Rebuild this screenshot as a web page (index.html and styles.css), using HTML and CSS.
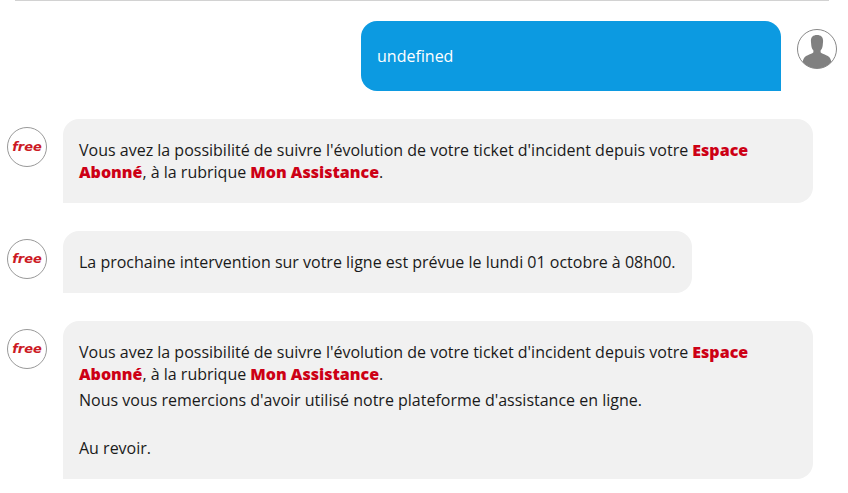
FILE: index.html
```html
<!DOCTYPE html>
<html lang="fr">
<head>
<meta charset="utf-8">
<title>Assistance Free</title>
<link rel="stylesheet" href="styles.css">
</head>
<body>
<hr class="divider">
<main class="chat">
  <div class="message message-user">
    <div class="bubble">undefined</div>
    <svg class="avatar" viewBox="0 0 40 40" aria-hidden="true">
      <circle class="ring" cx="20" cy="20" r="19.5"/>
      <path class="person" d="M20 6C24 6 26.2 8.2 26.1 12L25.7 16.5C25.5 18.8 24.6 20.4 23.6 21.5V23.2C25 25.2 30.4 25.8 32.4 28.2C33.6 29.6 34.2 31.6 34.4 33A19.5 19.5 0 0 1 5.6 33C5.8 31.6 6.4 29.6 7.6 28.2C9.6 25.8 15 25.2 16.4 23.2V21.5C15.4 20.4 14.5 18.8 14.3 16.5L13.9 12C13.8 8.2 16 6 20 6Z"/>
    </svg>
  </div>

  <div class="message">
    <div class="avatar logo">free</div>
    <div class="bubble">
      <p>Vous avez la possibilité de suivre l'évolution de votre ticket d'incident depuis votre <a href="#">Espace Abonné</a>, à la rubrique <a href="#">Mon Assistance</a>.</p>
    </div>
  </div>

  <div class="message">
    <div class="avatar logo">free</div>
    <div class="bubble">
      <p>La prochaine intervention sur votre ligne est prévue le lundi 01 octobre à 08h00.</p>
    </div>
  </div>

  <div class="message">
    <div class="avatar logo">free</div>
    <div class="bubble bubble-closing">
      <p>Vous avez la possibilité de suivre l'évolution de votre ticket d'incident depuis votre <a href="#">Espace Abonné</a>, à la rubrique <a href="#">Mon Assistance</a>.</p>
      <p class="closing">Nous vous remercions d'avoir utilisé notre plateforme d'assistance en ligne.<br><br>Au revoir.</p>
    </div>
  </div>
</main>
</body>
</html>
```
FILE: styles.css
```css
* {
  box-sizing: border-box;
}

body {
  margin: 0;
  background: #fff;
  color: #1a1a1a;
  font: 16px/22px "Open Sans", sans-serif;
}

.divider {
  height: 1px;
  margin: 0 19px 0 15px;
  border: 0;
  background: #d2d2d2;
}

.chat {
  display: flex;
  flex-direction: column;
  gap: 28px;
  padding: 20px 11px 14px 7px;
}

.message {
  display: flex;
  align-items: flex-start;
  gap: 16px;
}

.message-user {
  justify-content: flex-end;
}

.bubble {
  max-width: 750px;
  padding: 20px 16px;
  border-radius: 16px 16px 16px 0;
  background: #f1f1f1;
}

.message-user .bubble {
  width: 420px;
  padding: 24px 16px;
  border-radius: 16px 16px 0 16px;
  background: #0c9ae1;
  color: #fff;
}

.bubble p {
  margin: 0;
}

.bubble-closing {
  padding-bottom: 19px;
}

.bubble .closing {
  margin-top: 3px;
  line-height: 24px;
}

.bubble a {
  color: #cd0015;
  font-weight: 800;
  text-decoration: none;
}

.avatar {
  flex: none;
  width: 40px;
  height: 40px;
  margin-top: 8px;
}

.ring {
  fill: #fff;
  stroke: #888;
}

.person {
  fill: #808080;
}

.logo {
  display: flex;
  justify-content: center;
  border: 1px solid #999;
  border-radius: 50%;
  color: #cc1a24;
  font: italic bold 13px/38px "DejaVu Sans", sans-serif;
}
```
